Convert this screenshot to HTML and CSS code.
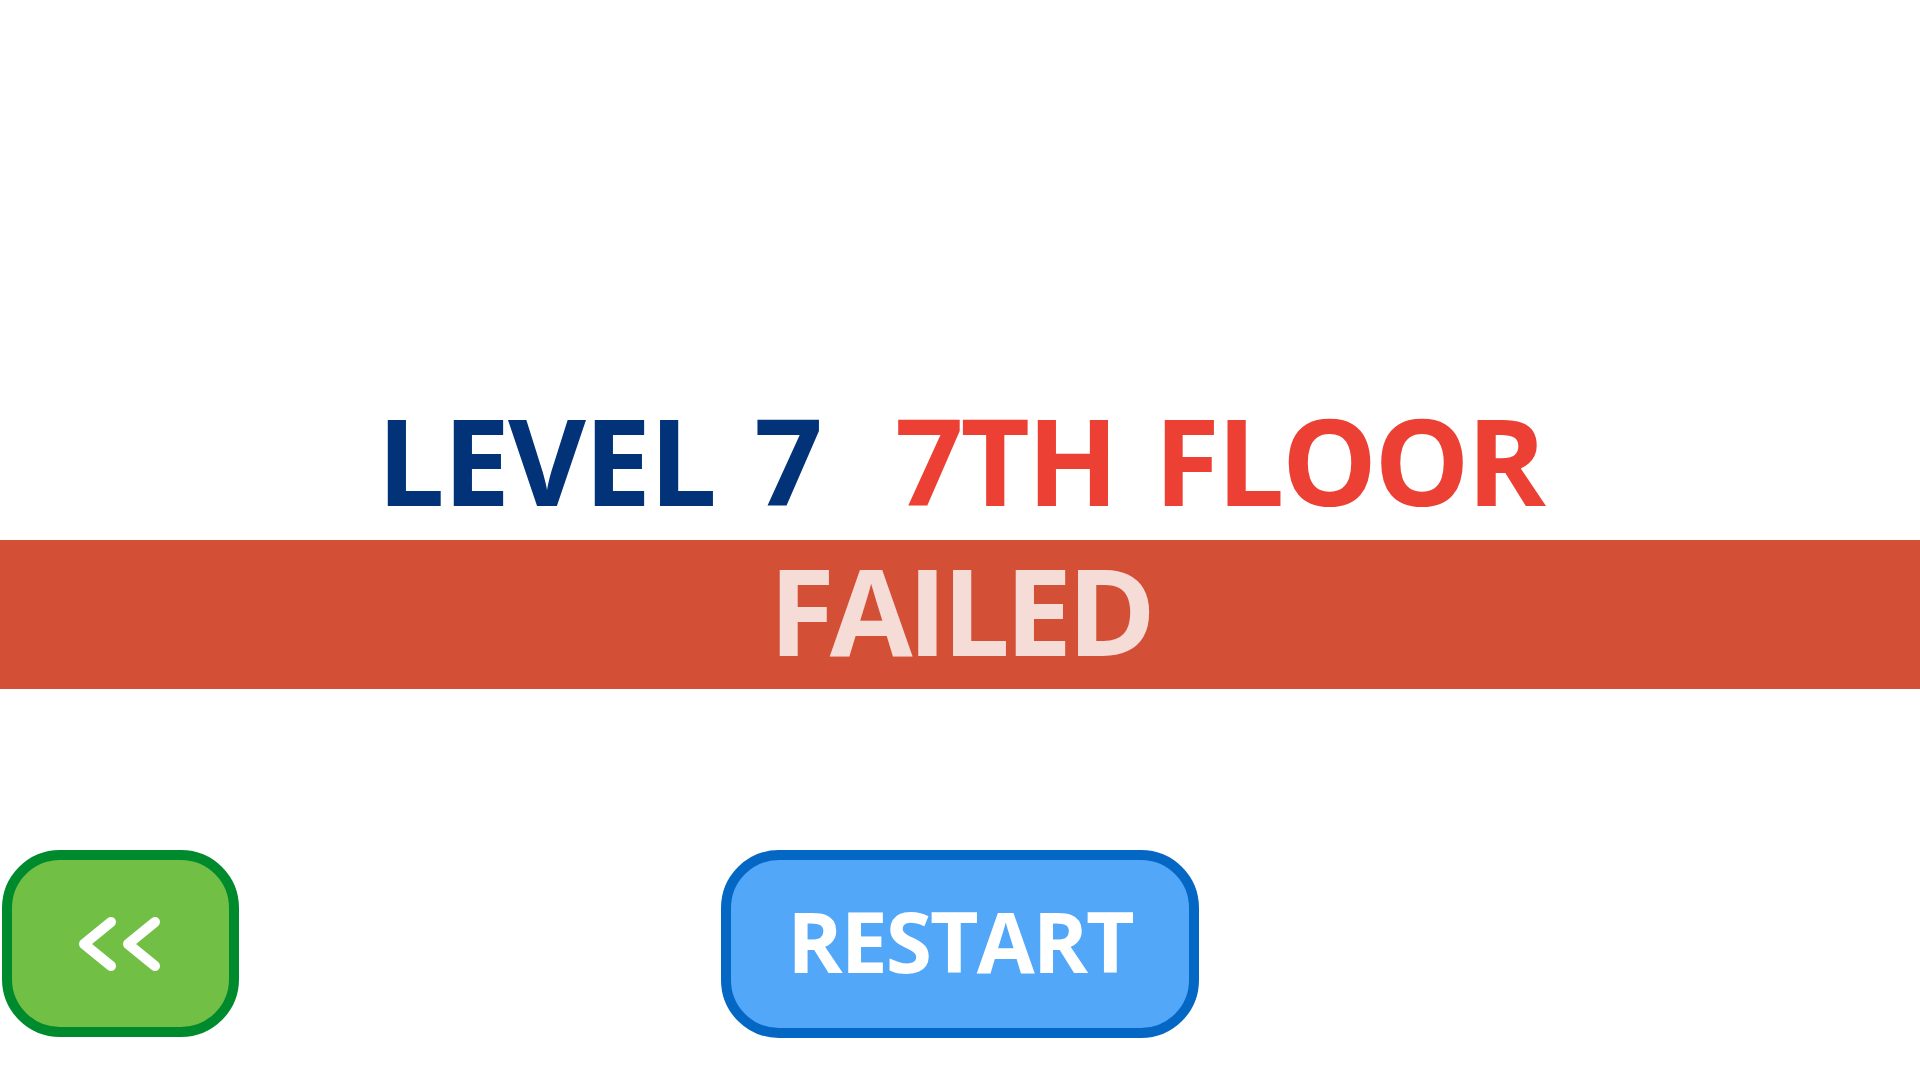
FILE: index.html
```html
<!DOCTYPE html>
<html>
<head>
<meta charset="utf-8">
<title>Failed</title>
<link rel="stylesheet" href="styles.css">
</head>
<body>
<div class="screen">
  <h1 class="title">
    <span class="level">LEVEL 7</span>
    <span class="floor">7TH FLOOR</span>
  </h1>
  <div class="banner"><span class="banner-text">FAILED</span></div>
  <div class="actions">
    <button class="btn btn-back" aria-label="Back">
      <svg width="90" height="60" viewBox="0 0 90 60">
        <path d="M38 8 L11 30 L38 52" fill="none" stroke="#fff" stroke-width="10" stroke-linecap="round" stroke-linejoin="round"/>
        <path d="M82 8 L55 30 L82 52" fill="none" stroke="#fff" stroke-width="10" stroke-linecap="round" stroke-linejoin="round"/>
      </svg>
    </button>
    <button class="btn btn-restart">RESTART</button>
    <div></div>
  </div>
</div>
</body>
</html>
```
FILE: styles.css
```css
html, body {
  margin: 0;
  padding: 0;
  background: #ffffff;
}
.screen {
  width: 1920px;
  height: 1080px;
  display: flex;
  flex-direction: column;
  font-family: "Open Sans", "DejaVu Sans", sans-serif;
  font-weight: 700;
}
.title {
  margin: 400px 0 0 0;
  height: 120px;
  line-height: 120px;
  font-size: 120px;
  font-weight: 700;
  letter-spacing: -2px;
  word-spacing: 10px;
  display: flex;
  justify-content: center;
  gap: 74px;
  white-space: pre;
}
.level { color: #023278; }
.floor {
  color: #ec4034;
  letter-spacing: -3px;
}
.banner {
  margin-top: 20px;
  height: 149px;
  box-sizing: border-box;
  padding-bottom: 10px;
  background: #d35036;
  display: flex;
  align-items: center;
  justify-content: center;
}
.banner-text {
  color: #f5dcd6;
  font-size: 120px;
  line-height: 120px;
  letter-spacing: -5px;
}
.actions {
  margin-top: 161px;
  display: grid;
  grid-template-columns: 1fr auto 1fr;
  align-items: start;
}
.btn {
  box-sizing: border-box;
  height: 188px;
  border: 10px solid;
  border-radius: 58px;
  display: flex;
  align-items: center;
  justify-content: center;
  padding: 0;
  font-family: inherit;
  font-weight: 700;
  color: #ffffff;
}
.btn-back {
  justify-self: start;
  margin-left: 2px;
  width: 237px;
  height: 187px;
  padding-right: 6px;
  background: #71bf44;
  border-color: #008a2e;
}
.btn-restart {
  width: 478px;
  padding-bottom: 7px;
  background: #52a7f8;
  border-color: #0467c4;
  font-size: 84px;
  line-height: 84px;
  letter-spacing: -2px;
}
```
